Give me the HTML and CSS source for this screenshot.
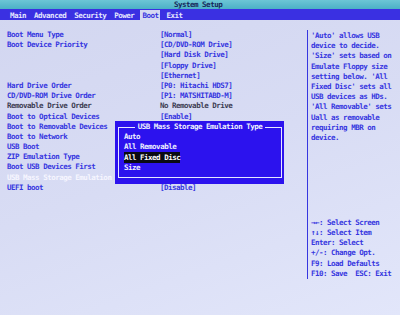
FILE: index.html
```html
<!DOCTYPE html>
<html lang="en">
<head>
  <meta charset="UTF-8" />
  <meta name="viewport" content="width=device-width, initial-scale=1.0"/>
  <title>System Setup</title>
  <link rel="stylesheet" href="styles.css">
</head>
<body>
  <div class="titlebar">System Setup</div>
  <div class="menubar">
    <span class="tab">Main</span>
    <span class="tab">Advanced</span>
    <span class="tab">Security</span>
    <span class="tab">Power</span>
    <span class="tab active">Boot</span>
    <span class="tab">Exit</span>
  </div>

  <div class="main">
    <div class="settings">
      <div class="row"><span>Boot Menu Type</span><span>[Normal]</span></div>
      <div class="row"><span>Boot Device Priority</span><span>[CD/DVD-ROM Drive]</span></div>
      <div class="row"><span></span><span>[Hard Disk Drive]</span></div>
      <div class="row"><span></span><span>[Floppy Drive]</span></div>
      <div class="row"><span></span><span>[Ethernet]</span></div>
      <div class="row"><span>Hard Drive Order</span><span>[P0: Hitachi HDS7]</span></div>
      <div class="row"><span>CD/DVD-ROM Drive Order</span><span>[P1: MATSHITABD-M]</span></div>
      <div class="row off"><span>Removable Drive Order</span><span>No Removable Drive</span></div>
      <div class="row"><span>Boot to Optical Devices</span><span>[Enable]</span></div>
      <div class="row"><span>Boot to Removable Devices</span><span></span></div>
      <div class="row"><span>Boot to Network</span><span></span></div>
      <div class="row"><span>USB Boot</span><span></span></div>
      <div class="row"><span>ZIP Emulation Type</span><span></span></div>
      <div class="row"><span>Boot USB Devices First</span><span></span></div>
      <div class="row current"><span>USB Mass Storage Emulation</span><span></span></div>
      <div class="row"><span>UEFI boot</span><span>[Disable]</span></div>

      <div class="popup">
        <div class="popup-frame">
          <div class="popup-title"><span>USB Mass Storage Emulation Type</span></div>
          <div class="option">Auto</div>
          <div class="option">All Removable</div>
          <div class="option"><span class="picked">All Fixed Disc</span></div>
          <div class="option">Size</div>
        </div>
      </div>
    </div>

    <div class="help">
      <div class="help-text">'Auto' allows USB
device to decide.
'Size' sets based on
Emulate Floppy size
setting below. 'All
Fixed Disc' sets all
USB devices as HDs.
'All Removable' sets
Uall as removable
requiring MBR on
device.</div>
      <div class="keys">→←: Select Screen
↑↓: Select Item
Enter: Select
+/-: Change Opt.
F9: Load Defaults
F10: Save  ESC: Exit</div>
    </div>
  </div>
</body>
</html>
```

FILE: styles.css
```css
body {
  margin: 0;
  width: 400px;
  height: 315px;
  overflow: hidden;
  font-family: "DejaVu Sans Mono", "Liberation Mono", monospace;
  font-weight: bold;
  font-size: 7.5px;
  letter-spacing: -0.5px;
  line-height: 10.2px;
  color: #3636e0;
  background: linear-gradient(160deg, #d2d6f0 0%, #d8dcf4 50%, #e2e6fa 100%);
}

.titlebar {
  height: 9px;
  line-height: 10px;
  padding-left: 174px;
  background: linear-gradient(to bottom, #6cc6d6, #4cb0c6);
  color: #16285a;
}

.menubar {
  height: 11px;
  display: flex;
  gap: 4px;
  padding-left: 8px;
  background: #3a30e2;
  color: #e4e6ff;
}

.tab {
  padding: 0 2px;
  margin-top: 1px;
  line-height: 11px;
}

.tab.active {
  background: #d6daf2;
  color: #3636e0;
}

.main {
  display: flex;
  margin-top: 10px;
  height: 267px;
}

.settings {
  position: relative;
  width: 300px;
  padding-left: 7px;
}

.row {
  display: grid;
  grid-template-columns: 153px 1fr;
  height: 10.2px;
  white-space: pre;
}

.row.off {
  color: #3c3c52;
}

.row.current span:first-child {
  color: #f6f6ff;
}

.popup {
  position: absolute;
  left: 115px;
  top: 91px;
  width: 164px;
  height: 51px;
  padding: 6px 2px 6px 3px;
  background: #2c12ee;
  color: #eef0ff;
}

.popup-frame {
  height: 100%;
  box-sizing: border-box;
  border: 1px solid #e6e8ff;
  padding: 4px 0 0 5px;
}

.popup-title {
  margin: -10px 0 0 -5px;
  height: 10.2px;
  text-align: center;
}

.popup-title span {
  background: #2c12ee;
  padding: 0 3px;
}

.option {
  height: 10.2px;
}

.picked {
  background: #0a0a12;
  color: #ffffff;
  padding: 1px 0;
}

.help {
  flex: 1;
  display: flex;
  flex-direction: column;
  justify-content: space-between;
  border-left: 1px solid #3636e0;
  padding-left: 3px;
  margin-bottom: 18px;
  white-space: pre;
}

.help-text {
  margin-top: 1px;
}
```
